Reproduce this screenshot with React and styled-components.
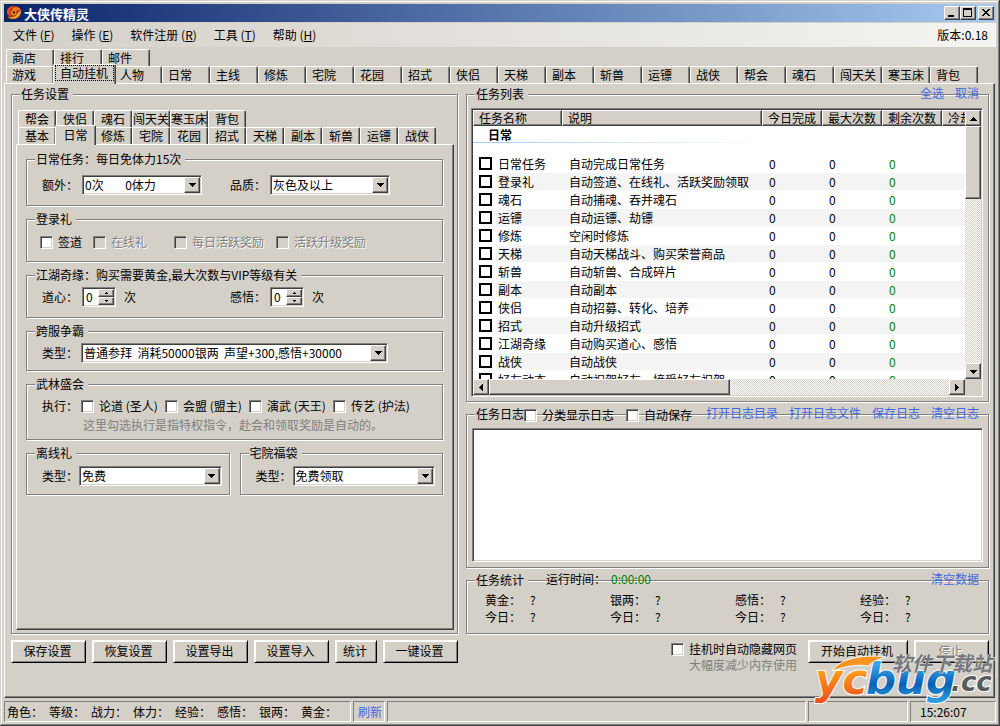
import React, { useState } from 'react';
import styled, { createGlobalStyle, css } from 'styled-components';

const MAIN_TABS_BACK = ['商店', '排行', '邮件'];
const MAIN_TABS = [
  '游戏', '自动挂机', '人物', '日常', '主线', '修炼', '宅院', '花园', '招式', '侠侣',
  '天梯', '副本', '斩兽', '运镖', '战侠', '帮会', '魂石', '闯天关', '寒玉床', '背包',
];
const SUB_TABS_BACK = ['帮会', '侠侣', '魂石', '闯天关', '寒玉床', '背包'];
const SUB_TABS = ['基本', '日常', '修炼', '宅院', '花园', '招式', '天梯', '副本', '斩兽', '运镖', '战侠'];

const MENUS = [
  ['文件', 'F'],
  ['操作', 'E'],
  ['软件注册', 'R'],
  ['工具', 'T'],
  ['帮助', 'H'],
];

const TASKS = [
  ['日常任务', '自动完成日常任务'],
  ['登录礼', '自动签道、在线礼、活跃奖励领取'],
  ['魂石', '自动捕魂、吞并魂石'],
  ['运镖', '自动运镖、劫镖'],
  ['修炼', '空闲时修炼'],
  ['天梯', '自动天梯战斗、购买荣誉商品'],
  ['斩兽', '自动斩兽、合成碎片'],
  ['副本', '自动副本'],
  ['侠侣', '自动招募、转化、培养'],
  ['招式', '自动升级招式'],
  ['江湖奇缘', '自动购买道心、感悟'],
  ['战侠', '自动战侠'],
  ['好友动态', '自动祝贺好友、接受好友祝贺'],
];

const STATS = ['黄金', '银两', '感悟', '经验'];
const ROLE_INFO = ['角色', '等级', '战力', '体力', '经验', '感悟', '银两', '黄金'];
const NB = '\u00a0';

function GroupBox({ title, pad, children }) {
  return (
    <Group>
      <Legend>{title}</Legend>
      <GroupBody $pad={pad}>{children}</GroupBody>
    </Group>
  );
}

function Combo({ id, value, width }) {
  return (
    <ComboBox $width={width}>
      <select id={id} defaultValue={value}>
        <option>{value}</option>
      </select>
      <ComboArrow>
        <svg width="7" height="4" viewBox="0 0 7 4" shapeRendering="crispEdges">
          <path d="M0 0h7v1H6v1H5v1H4v1H3V3H2V2H1V1H0z" />
        </svg>
      </ComboArrow>
    </ComboBox>
  );
}

function Spin({ id }) {
  const [value, setValue] = useState(0);
  return (
    <SpinBox>
      <input
        id={id}
        type="number"
        value={value}
        onChange={(e) => setValue(Number(e.target.value))}
      />
      <SpinButtons>
        <button type="button" aria-label="增加" onClick={() => setValue(value + 1)}>
          <svg width="3" height="2" shapeRendering="crispEdges"><path d="M1 0h1v1h1v1H0V1h1z" /></svg>
        </button>
        <button type="button" aria-label="减少" onClick={() => setValue(Math.max(0, value - 1))}>
          <svg width="3" height="2" shapeRendering="crispEdges"><path d="M0 0h3v1H2v1H1V1H0z" /></svg>
        </button>
      </SpinButtons>
    </SpinBox>
  );
}

function Check({ children, disabled }) {
  return (
    <CheckLabel $disabled={disabled}>
      <CheckInput type="checkbox" disabled={disabled} />
      <span>{children}</span>
    </CheckLabel>
  );
}

function Arrow({ dir }) {
  const paths = {
    up: 'M3 0h1v1h1v1h1v1h1v1H0V3h1V2h1V1h1z',
    down: 'M0 0h7v1H6v1H5v1H4v1H3V3H2V2H1V1H0z',
    left: 'M3 0h1v7H3V6H2V5H1V4H0V3h1V2h1V1h1z',
    right: 'M0 0h1v1h1v1h1v1h1v1H3v1H2v1H1v1H0z',
  };
  return (
    <svg width="7" height="7" viewBox={dir === 'up' || dir === 'down' ? '0 -2 7 7' : '-1 0 7 7'} shapeRendering="crispEdges">
      <path d={paths[dir]} />
    </svg>
  );
}

function AppIcon() {
  return (
    <svg width="16" height="16" viewBox="0 0 16 16">
      <path d="M1 6C2 2 6 1 9 1c3 0 5 2 6 4 0 5-3 9-8 9-2 0-3-1-5-1 0-1 0-2 1-2-2-1-2-3-2-5z" fill="#a83a14" />
      <path d="M1 7C1 3 4 1 8 1c-2 1-4 3-4 6 0 1 0 2 1 3C3 11 1 9 1 7z" fill="#ec4a14" />
      <path d="M7 3c3-2 7-1 8 3-2-1-4-1-5 0L7 5C6 5 6 4 7 3z" fill="#f4761c" />
      <path d="M15 6c0 5-4 8-8 8-2 0-4-1-5-2 4 1 7 0 9-3 1-1 2-3 4-3z" fill="#f8a02c" />
      <path d="M6 10c-2-2-1-5 2-5 2 0 3 2 2 4-1 1-3 2-4 1z" fill="#f89428" />
      <path d="M7 9c-1-1 0-3 1-3s2 1 1 2-1 1-2 1z" fill="#5c1c10" />
    </svg>
  );
}

function SiteLogo() {
  return (
    <svg width="184" height="56" viewBox="0 0 184 56">
      <defs>
        <linearGradient id="orange" x1="0" y1="0" x2="0" y2="1">
          <stop offset="0.3" stopColor="#f9a01e" />
          <stop offset="1" stopColor="#ee4a1c" />
        </linearGradient>
        <linearGradient id="blue" x1="0" y1="0" x2="0" y2="1">
          <stop offset="0.2" stopColor="#3aa5e8" />
          <stop offset="0.6" stopColor="#0a60b4" />
          <stop offset="1" stopColor="#35a8ea" />
        </linearGradient>
      </defs>
      <LogoText x="1" y="40" $size={42} fill="url(#orange)">yc</LogoText>
      <LogoText x="52" y="40" $size={42} fill="url(#blue)">bug</LogoText>
      <path
        d="M18 17C26 5 46 0 72 3c-8 2-14 5-18 9-9-2-22 0-36 5z"
        fill="#f7931e"
        stroke="#fff"
      />
      <LogoText x="137" y="37" $size={26} fill="#58595b">.cc</LogoText>
      <LogoCaption x="78" y="17">软件下载站</LogoCaption>
    </svg>
  );
}

function App() {
  return (
    <>
      <GlobalStyle />
      <Window>
        <TitleBar>
          <AppIcon />
          <Title>大侠传精灵</Title>
          <WinButton aria-label="最小化">
            <svg width="12" height="10" shapeRendering="crispEdges"><path d="M2 7h6v2H2z" /></svg>
          </WinButton>
          <WinButton aria-label="最大化">
            <svg width="12" height="10" shapeRendering="crispEdges"><path d="M1 0h9v9H1zM2 2v6h7V2z" fillRule="evenodd" /></svg>
          </WinButton>
          <WinButton aria-label="关闭" $spaced>
            <svg width="12" height="10" viewBox="0 0 12 10" shapeRendering="crispEdges">
              <path d="M2 1h2v1h1v1h2V2h1V1h2v1H9v1H8v1H7v1h1v1h1v1h1v1H8V7H7V6H5v1H4v1H2V7h1V6h1V5h1V4H4V3H3V2H2z" />
            </svg>
          </WinButton>
        </TitleBar>

        <MenuBar>
          {MENUS.map(([name, key]) => (
            <MenuItem key={key} type="button">
              {name} (<u>{key}</u>)
            </MenuItem>
          ))}
          <Version>版本:0.18</Version>
        </MenuBar>

        <MainTabs>
          <TabRow>
            {MAIN_TABS_BACK.map((t) => <MainTab key={t}>{t}</MainTab>)}
          </TabRow>
          <TabRow>
            {MAIN_TABS.map((t) => (
              <MainTab key={t} $active={t === '自动挂机'}>
                {t === '自动挂机' ? <Focus>{t}</Focus> : t}
              </MainTab>
            ))}
          </TabRow>
        </MainTabs>

        <MainPanel>
          <Columns>
            <FillGroup>
              <Legend>任务设置</Legend>
              <FillBody $pad="10px 3px 3px 4px" $column>
                <SubTabs>
                  <TabRow>
                    {SUB_TABS_BACK.map((t) => <SubTab key={t}>{t}</SubTab>)}
                  </TabRow>
                  <TabRow>
                    {SUB_TABS.map((t) => <SubTab key={t} $active={t === '日常'}>{t}</SubTab>)}
                  </TabRow>
                </SubTabs>
                <SubPanel>
                  <GroupBox title="日常任务：每日免体力15次" pad="10px 15px">
                    <PairRow>
                      <label htmlFor="extra">额外：</label>
                      <Combo id="extra" width={120} value={`0次${NB.repeat(8)}0体力`} />
                      <label htmlFor="quality">品质：</label>
                      <Combo id="quality" width={120} value="灰色及以上" />
                    </PairRow>
                  </GroupBox>

                  <GroupBox title="登录礼" pad="9px 13px 11px">
                    <GiftRow>
                      <Check>签道</Check>
                      <Check disabled>在线礼</Check>
                      <Check disabled>每日活跃奖励</Check>
                      <Check disabled>活跃升级奖励</Check>
                    </GiftRow>
                  </GroupBox>

                  <GroupBox title="江湖奇缘：购买需要黄金,最大次数与VIP等级有关" pad="6px 15px 10px">
                    <PairRow>
                      <label htmlFor="heart">道心：</label>
                      <Inline><Spin id="heart" />次</Inline>
                      <label htmlFor="insight">感悟：</label>
                      <Inline><Spin id="insight" />次</Inline>
                    </PairRow>
                  </GroupBox>

                  <GroupBox title="跨服争霸" pad="6px 15px 7px">
                    <Inline $gap={3}>
                      <label htmlFor="cross">类型：</label>
                      <Combo
                        id="cross"
                        width={307}
                        value={`普通参拜${NB}${NB}消耗50000银两${NB}${NB}声望+300,感悟+30000`}
                      />
                    </Inline>
                  </GroupBox>

                  <GroupBox title="武林盛会" pad="8px 0 6px 15px">
                    <MeetingRow>
                      <span>执行：</span>
                      <Check>论道 (圣人)</Check>
                      <Check>会盟 (盟主)</Check>
                      <Check>演武 (天王)</Check>
                      <Check>传艺 (护法)</Check>
                    </MeetingRow>
                    <Hint>这里勾选执行是指特权指令，赴会和领取奖励是自动的。</Hint>
                  </GroupBox>

                  <TwoGroups>
                    <GroupBox title="离线礼" pad="7px 7px 8px 15px">
                      <Inline $gap={1}>
                        <label htmlFor="offline">类型：</label>
                        <Combo id="offline" value="免费" />
                      </Inline>
                    </GroupBox>
                    <GroupBox title="宅院福袋" pad="7px 7px 8px 15px">
                      <Inline $gap={1}>
                        <label htmlFor="bag">类型：</label>
                        <Combo id="bag" value="免费领取" />
                      </Inline>
                    </GroupBox>
                  </TwoGroups>
                </SubPanel>
              </FillBody>
            </FillGroup>

            <RightSide>
              <GroupWrap $grow={2} $basis={314}>
                <FillGroup>
                  <Legend>任务列表</Legend>
                  <FillBody $pad="8px 5px 4px 4px">
                    <ListView>
                      <ListBody>
                        <TaskTable>
                          <colgroup>
                            <col width="89" />
                            <col width="200" />
                            <col width="60" />
                            <col width="60" />
                            <col width="60" />
                            <col width="60" />
                          </colgroup>
                          <thead>
                            <tr>
                              <th>任务名称</th>
                              <th>说明</th>
                              <th>今日完成</th>
                              <th>最大次数</th>
                              <th>剩余次数</th>
                              <th>冷却</th>
                            </tr>
                          </thead>
                          <tbody>
                            <CategoryRow>
                              <td colSpan="6"><span>日常</span></td>
                            </CategoryRow>
                            {TASKS.map(([name, desc], i) => (
                              <TaskRow key={name} $odd={i % 2 === 1}>
                                <td>
                                  <label>
                                    <ListCheck type="checkbox" />
                                    <span>{name}</span>
                                  </label>
                                </td>
                                <td>{desc}</td>
                                <td>0</td>
                                <td>0</td>
                                <LeftCount>0</LeftCount>
                                <td />
                              </TaskRow>
                            ))}
                          </tbody>
                        </TaskTable>
                      </ListBody>
                      <ScrollTrack $vertical>
                        <ScrollButton aria-label="向上滚动"><Arrow dir="up" /></ScrollButton>
                        <ScrollThumb $size={27} />
                        <ScrollSpace />
                        <ScrollButton aria-label="向下滚动"><Arrow dir="down" /></ScrollButton>
                      </ScrollTrack>
                      <ScrollTrack>
                        <ScrollButton aria-label="向左滚动"><Arrow dir="left" /></ScrollButton>
                        <ScrollThumb $size={49} />
                        <ScrollSpace />
                        <ScrollButton aria-label="向右滚动"><Arrow dir="right" /></ScrollButton>
                      </ScrollTrack>
                    </ListView>
                  </FillBody>
                </FillGroup>
                <TopRight>
                  <Link href="#all">全选</Link>
                  <Link href="#none">取消</Link>
                </TopRight>
              </GroupWrap>

              <GroupWrap $grow={1} $basis={160}>
                <FillGroup>
                  <Legend>任务日志</Legend>
                  <FillBody $pad="8px 5px 5px">
                    <LogBox aria-label="任务日志" />
                  </FillBody>
                </FillGroup>
                <LogOptions>
                  <Check>分类显示日志</Check>
                  <Check>自动保存</Check>
                </LogOptions>
                <TopRight>
                  <Link href="#dir">打开日志目录</Link>
                  <Link href="#file">打开日志文件</Link>
                  <Link href="#save">保存日志</Link>
                  <Link href="#clear">清空日志</Link>
                </TopRight>
              </GroupWrap>

              <GroupWrap $grow={0} $basis={60}>
                <FillGroup>
                  <Legend>任务统计</Legend>
                  <FillBody $pad="5px 3px 8px 18px">
                    <StatGrid>
                      {STATS.map((s) => (
                        <Stat key={s}><dt>{s}：</dt><dd>?</dd></Stat>
                      ))}
                      {STATS.map((s) => (
                        <Stat key={`${s}-today`}><dt>今日：</dt><dd>?</dd></Stat>
                      ))}
                    </StatGrid>
                  </FillBody>
                </FillGroup>
                <RunTime>
                  <span>运行时间：</span>
                  <output>0:00:00</output>
                </RunTime>
                <TopRight>
                  <Link href="#reset">清空数据</Link>
                </TopRight>
              </GroupWrap>
            </RightSide>
          </Columns>

          <Footer>
            <Button $width={75}>保存设置</Button>
            <Button $width={75}>恢复设置</Button>
            <Button $width={75}>设置导出</Button>
            <Button $width={75}>设置导入</Button>
            <Button $width={42}>统计</Button>
            <Button $width={75}>一键设置</Button>
            <HideOption>
              <Check>挂机时自动隐藏网页</Check>
              <p>大幅度减少内存使用</p>
            </HideOption>
            <Button $width={100}>开始自动挂机</Button>
            <Button $width={75} disabled>停止</Button>
          </Footer>
        </MainPanel>

        <StatusBar>
          <StatusCell $width={347}>
            {ROLE_INFO.map((r) => <RoleInfo key={r}>{r}：</RoleInfo>)}
          </StatusCell>
          <StatusCell $width={32}><Link href="#refresh">刷新</Link></StatusCell>
          <StatusCell />
          <StatusCell $width={100} />
          <StatusCell $width={86}><Clock>15:26:07</Clock></StatusCell>
        </StatusBar>

        <Watermark><SiteLogo /></Watermark>
      </Window>
    </>
  );
}

export default App

const GlobalStyle = createGlobalStyle`
  * {
    box-sizing: border-box;
  }
  body {
    margin: 0;
    background: #d4d0c8;
    color: #000;
    font: 12px/16px "Noto Sans CJK SC", sans-serif;
  }
  button, input, select, textarea {
    font: inherit;
    color: inherit;
    margin: 0;
    padding: 0;
    border: 0;
    border-radius: 0;
  }
  svg {
    display: block;
    flex: none;
  }
`;

const raised = css`
  border: 1px solid;
  border-color: #fff #404040 #404040 #fff;
  box-shadow: inset -1px -1px 0 #808080;
  background: #d4d0c8;
`;

const sunken = css`
  border: 1px solid;
  border-color: #808080 #fff #fff #808080;
  box-shadow: inset 1px 1px 0 #404040, inset -1px -1px 0 #d4d0c8;
  background: #fff;
`;

const Window = styled.div`
  position: relative;
  display: flex;
  flex-direction: column;
  min-height: 100vh;
  min-width: 1000px;
  padding: 4px;
  background: #d4d0c8;
  box-shadow: inset -1px -1px 0 #404040, inset 1px 1px 0 #d4d0c8,
    inset -2px -2px 0 #808080, inset 2px 2px 0 #fff;
`;

const TitleBar = styled.header`
  display: flex;
  align-items: center;
  height: 18px;
  padding: 0 2px;
  background: linear-gradient(to right, #0a246a, #a6caf0);
`;

const Title = styled.h1`
  flex: 1;
  margin: 0 0 0 2px;
  color: #fff;
  font-size: 13px;
  line-height: 17px;
  font-weight: bold;
`;

const WinButton = styled.button`
  ${raised}
  display: flex;
  align-items: center;
  justify-content: center;
  width: 16px;
  height: 14px;
  margin-left: ${(p) => (p.$spaced ? '2px' : '0')};
`;

const MenuBar = styled.nav`
  display: flex;
  align-items: center;
  gap: 17px;
  height: 24px;
  margin-top: 1px;
  padding: 0 8px 0 9px;
  background: linear-gradient(to right, #d4d0c8, #f5f4f2);
`;

const MenuItem = styled.button`
  background: none;
  white-space: nowrap;
`;

const Version = styled.span`
  margin-left: auto;
`;

const MainTabs = styled.div`
  margin: 2px 0 0 2px;
`;

const SubTabs = styled.div`
  margin-left: 2px;
`;

const TabRow = styled.div`
  display: flex;
  height: 17px;
`;

const Tab = styled.button`
  flex: none;
  height: 17px;
  padding-bottom: 1px;
  line-height: 15px;
  background: #d4d0c8;
  border: 1px solid;
  border-color: #fff #404040 transparent #fff;
  border-bottom: 0;
  border-radius: 2px 2px 0 0;
  box-shadow: inset -1px 0 0 #808080;
  white-space: nowrap;
  ${(p) => p.$active && css`
    position: relative;
    z-index: 1;
    height: 20px;
    margin: -2px -2px -1px -1px;
    padding-bottom: 3px;
  `}
`;

const MainTab = styled(Tab)`
  width: ${(p) => (p.$active ? '63px' : '48px')};
  padding-left: ${(p) => (p.$active ? '1px' : '5px')};
  text-align: left;
`;

const SubTab = styled(Tab)`
  width: ${(p) => (p.$active ? '41px' : '38px')};
`;

const Focus = styled.span`
  display: block;
  width: 59px;
  height: 16px;
  padding-left: 4px;
  line-height: 13px;
  border: 1px dotted #000;
`;

const MainPanel = styled.main`
  ${raised}
  flex: 1;
  display: flex;
  flex-direction: column;
  margin-right: 1px;
  padding: 4px 5px 25px 6px;
`;

const Columns = styled.div`
  flex: 1;
  display: grid;
  grid-template-columns: 447px 1fr;
  gap: 8px;
`;

const Group = styled.fieldset`
  min-width: 0;
  margin: 0;
  padding: 0;
  border: 1px solid #808080;
  box-shadow: inset 1px 1px 0 #fff, 1px 1px 0 #fff;
`;

const GroupBody = styled.div`
  padding: ${(p) => p.$pad};
`;

const Legend = styled.legend`
  margin-left: 8px;
  padding: 0 4px 0 1px;
  height: 12px;
  line-height: 11px;
  background: #d4d0c8;
  white-space: nowrap;
`;

const FillGroup = styled(Group)`
  flex: 1;
  display: flex;
`;

const FillBody = styled(GroupBody)`
  flex: 1;
  display: flex;
  flex-direction: ${(p) => (p.$column ? 'column' : 'row')};
  min-width: 0;
`;

const SubPanel = styled.div`
  ${raised}
  flex: 1;
  display: flex;
  flex-direction: column;
  gap: 7px;
  padding: 8px 10px 8px 9px;
`;

const PairRow = styled.div`
  display: grid;
  grid-template-columns: 40px 148px 40px 1fr;
  align-items: center;
`;

const GiftRow = styled.div`
  display: grid;
  grid-template-columns: 53px 81px 102px 1fr;
`;

const MeetingRow = styled.div`
  display: grid;
  grid-template-columns: 39px repeat(4, 84px);
`;

const Inline = styled.div`
  display: flex;
  align-items: center;
  gap: ${(p) => p.$gap ?? 8}px;

  > label {
    flex: none;
  }
`;

const TwoGroups = styled.div`
  display: grid;
  grid-template-columns: 1fr 1fr;
  gap: 10px;
`;

const Hint = styled.p`
  margin: 3px 0 0 41px;
  color: #808080;
`;

const ComboBox = styled.div`
  ${sunken}
  position: relative;
  height: 20px;
  padding: 2px;
  ${(p) => (p.$width ? `width: ${p.$width}px;` : 'flex: 1;')}

  select {
    display: block;
    appearance: none;
    width: 100%;
    height: 14px;
    line-height: 14px;
    background: #fff;
    outline: none;
  }
`;

const ComboArrow = styled.span`
  ${raised}
  position: absolute;
  top: 1px;
  right: 1px;
  bottom: 1px;
  width: 16px;
  display: flex;
  align-items: center;
  justify-content: center;
  pointer-events: none;
`;

const SpinBox = styled.div`
  ${sunken}
  display: flex;
  width: 34px;
  height: 20px;
  padding: 1px;

  input {
    flex: 1;
    min-width: 0;
    padding-left: 2px;
    appearance: textfield;
    background: none;
    outline: none;
  }
  input::-webkit-inner-spin-button {
    appearance: none;
    margin: 0;
  }
`;

const SpinButtons = styled.div`
  display: flex;
  flex-direction: column;
  width: 16px;

  button {
    ${raised}
    flex: 1;
    display: flex;
    align-items: center;
    justify-content: center;
  }
`;

const CheckLabel = styled.label`
  display: flex;
  align-items: center;
  gap: 5px;
  white-space: nowrap;
  ${(p) => p.$disabled && css`
    color: #808080;
    text-shadow: 1px 1px 0 #fff;
  `}
`;

const CheckInput = styled.input`
  && {
    ${sunken}
  }
  appearance: none;
  flex: none;
  width: 13px;
  height: 13px;

  &&:disabled {
    background: #d4d0c8;
  }
  &&:checked {
    background: #fff radial-gradient(#000 3px, transparent 4px);
  }
`;

const RightSide = styled.div`
  display: flex;
  flex-direction: column;
  gap: 6px;
  min-width: 0;
`;

const GroupWrap = styled.section`
  position: relative;
  display: flex;
  flex: ${(p) => `${p.$grow} 1 ${p.$basis}px`};
  min-height: 0;
`;

const TopRight = styled.div`
  position: absolute;
  top: -3px;
  right: 10px;
  display: flex;
  gap: 11px;
`;

const LogOptions = styled.div`
  position: absolute;
  top: -1px;
  left: 58px;
  display: flex;
  gap: 12px;
`;

const RunTime = styled.div`
  position: absolute;
  top: -3px;
  left: 80px;
  display: flex;
  gap: 5px;

  output {
    color: #008000;
  }
`;

const Link = styled.a`
  color: #4169e1;
  text-decoration: none;
`;

const ListView = styled.div`
  ${sunken}
  flex: 1;
  display: grid;
  grid-template-columns: 1fr 16px;
  grid-template-rows: 1fr 16px;
  min-width: 0;
  padding: 1px;
  background: #d4d0c8;
`;

const ListBody = styled.div`
  min-width: 0;
  height: 0;
  min-height: 100%;
  overflow: hidden;
  background: #fff;
`;

const TaskTable = styled.table`
  width: 529px;
  table-layout: fixed;
  border-collapse: separate;
  border-spacing: 0;

  th {
    ${raised}
    height: 16px;
    padding: 0 0 1px 5px;
    line-height: 13px;
    font-weight: normal;
    text-align: left;
    white-space: nowrap;
    overflow: hidden;
  }
  td {
    padding: 0 0 0 7px;
    white-space: nowrap;
  }
`;

const CategoryRow = styled.tr`
  && td {
    height: 29px;
    padding: 0 0 12px;
    font-weight: bold;
  }
  span {
    display: block;
    width: 300px;
    padding-left: 15px;
    line-height: 17px;
    background: linear-gradient(to right, #a6caf0, #fff) bottom / 100% 1px no-repeat;
  }
`;

const TaskRow = styled.tr`
  td {
    height: 18px;
    line-height: 17px;
    background: ${(p) => (p.$odd ? '#f4f4f4' : '#fff')};
    border-bottom: 1px solid #fff;
  }
  && td:first-child {
    padding: 0;
    background: #fff;
  }
  label {
    display: flex;
    align-items: center;
    padding-left: 6px;
  }
  label span {
    flex: 1;
    margin-left: 4px;
    padding-left: 2px;
    background: ${(p) => (p.$odd ? '#f4f4f4' : '#fff')};
  }
`;

const LeftCount = styled.td`
  color: #008000;
`;

const ListCheck = styled.input`
  && {
    border: 2px solid #000;
  }
  appearance: none;
  flex: none;
  width: 13px;
  height: 13px;
  background: #fff;

  &:checked {
    background: #000;
    box-shadow: inset 0 0 0 2px #fff;
  }
`;

const ScrollTrack = styled.div`
  display: flex;
  flex-direction: ${(p) => (p.$vertical ? 'column' : 'row')};
  min-width: 0;
  background: repeating-conic-gradient(#fff 0 25%, #d4d0c8 0 50%) 0 0 / 2px 2px;
`;

const ScrollButton = styled.button`
  ${raised}
  flex: none;
  display: flex;
  align-items: center;
  justify-content: center;
  width: 16px;
  height: 16px;
`;

const ScrollThumb = styled.div`
  ${raised}
  flex: 0 0 ${(p) => p.$size}%;
`;

const ScrollSpace = styled.div`
  flex: 1;
`;

const LogBox = styled.textarea`
  && {
    ${sunken}
  }
  flex: 1;
  min-width: 0;
  padding: 2px;
  resize: none;
  outline: none;
`;

const StatGrid = styled.dl`
  flex: 1;
  display: grid;
  grid-template-columns: repeat(4, 1fr);
  margin: 0;
`;

const Stat = styled.div`
  display: flex;
  line-height: 17px;

  dt {
    width: 45px;
  }
  dd {
    margin: 0;
  }
`;

const Footer = styled.footer`
  display: flex;
  align-items: flex-start;
  gap: 6px;
  height: 32px;
  margin-top: 6px;
`;

const Button = styled.button`
  flex: none;
  width: ${(p) => p.$width}px;
  height: 23px;
  padding: 0 2px 2px 0;
  background: #d4d0c8;
  border: 1px solid;
  border-color: #fff #000 #000 #fff;
  box-shadow: inset 1px 1px 0 #fff, inset -1px -1px 0 #808080;
  white-space: nowrap;

  &:disabled {
    color: #808080;
    text-shadow: 1px 1px 0 #fff;
  }
`;

const HideOption = styled.div`
  margin: 1px 5px 0 auto;

  p {
    margin: 0 0 0 18px;
    line-height: 15px;
    color: #808080;
  }
`;

const StatusBar = styled.footer`
  display: flex;
  gap: 2px;
  height: 21px;
  margin-top: 3px;
`;

const StatusCell = styled.div`
  display: flex;
  align-items: center;
  flex: ${(p) => (p.$width ? `0 0 ${p.$width}px` : '1')};
  padding-left: ${(p) => (p.$width === 32 ? '4px' : '2px')};
  border: 1px solid;
  border-color: #808080 #fff #fff #808080;
`;

const RoleInfo = styled.span`
  width: 42px;
`;

const Clock = styled.time`
  margin-left: 7px;
`;

const Watermark = styled.div`
  position: absolute;
  right: 2px;
  bottom: 16px;
  pointer-events: none;
`;

const LogoText = styled.text`
  font: italic bold ${(p) => p.$size}px "DejaVu Sans", sans-serif;
  stroke: #fff;
  stroke-width: 2px;
  paint-order: stroke;
`;

const LogoCaption = styled.text`
  font: italic bold 20px "Noto Sans CJK SC", sans-serif;
  fill: #76787b;
  stroke: #e8e6e2;
  stroke-width: 1px;
  paint-order: stroke;
`;
